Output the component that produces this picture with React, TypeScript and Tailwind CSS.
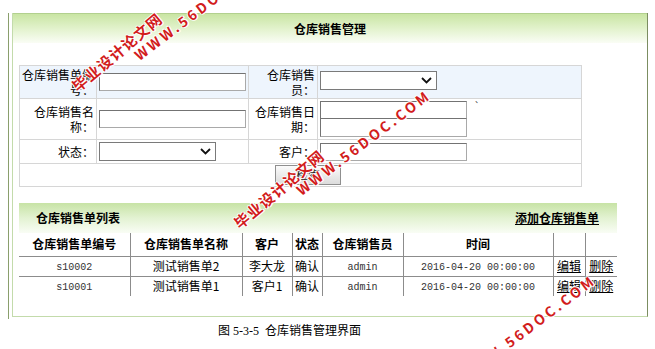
import React from "react";

const inputCls =
  "block h-[18px] w-[147px] border border-[#a9a9a9] border-t-[#737373] border-l-[#737373] bg-white";

function Select({ w }: { w: string }) {
  return (
    <div className={`relative h-[19px] ${w} border border-[#7a7a7a] bg-white`}>
      <svg
        className="absolute right-[4px] top-[5px]"
        width="11"
        height="7"
        viewBox="0 0 11 7"
      >
        <polyline points="1,1 5.5,5.5 10,1" fill="none" stroke="#111" strokeWidth="1.8" />
      </svg>
    </div>
  );
}

function Mark({ cls, text, spacing }: { cls: string; text: string; spacing: string }) {
  return (
    <div
      className={`pointer-events-none absolute whitespace-nowrap font-bold text-[#d21c1c] leading-[16px] ${spacing} [text-shadow:1px_0_#fff,-1px_0_#fff,0_1px_#fff,0_-1px_#fff,1px_1px_#fff] ${cls}`}
    >
      {text}
    </div>
  );
}

export default function App() {
  const rows = [
    { no: "s10002", name: "测试销售单", n: "2", cust: "李大龙", st: "确认", op: "admin", t: "2016-04-20 00:00:00" },
    { no: "s10001", name: "测试销售单", n: "1", cust: "客户1", st: "确认", op: "admin", t: "2016-04-20 00:00:00" },
  ];
  const mono = "[font-family:'Liberation_Mono',monospace] text-[10px] text-[#333]";
  return (
    <div className="relative h-[349px] w-[655px] overflow-hidden bg-white text-black [font-family:'Noto_Sans_CJK_SC','Liberation_Sans',sans-serif]">
      <div className="pl-[8px] pr-[7px] pt-[13px]">
        <div className="border-l border-[#8a9f6c] pb-[2px] pl-[3px]">
          <div className="flex h-[304px] flex-col border-b border-l border-r border-[#c3dbab] border-r-[#7b8d61]">
            {/* header */}
            <div className="flex h-[30px] items-center justify-center border-t border-[#b2d08e] bg-gradient-to-b from-[#c9e5a3] via-[#e2f2cc] to-[#fafdf5] text-[12px] font-bold">
              仓库销售管理
            </div>

            {/* form */}
            <div className="pl-[6px] pt-[22px]">
              <table className="w-[562px] table-fixed border-collapse text-[12px] leading-[15px]">
                <colgroup>
                  <col className="w-[77px]" />
                  <col className="w-[152px]" />
                  <col className="w-[69px]" />
                  <col className="w-[264px]" />
                </colgroup>
                <tbody>
                  <tr className="h-[33px] bg-[#eef5fd]">
                    <td className="border border-[#d6d6d6] pr-[2px] text-right align-middle">
                      仓库销售单编
                      <br />
                      号：
                    </td>
                    <td className="border border-[#d6d6d6] px-[2px]">
                      <input className={inputCls} />
                    </td>
                    <td className="border border-[#d6d6d6] pr-[2px] text-right">
                      仓库销售
                      <br />
                      员：
                    </td>
                    <td className="border border-[#d6d6d6] px-[2px] pb-[4px]">
                      <Select w="w-[117px]" />
                    </td>
                  </tr>
                  <tr className="h-[41px]">
                    <td className="border border-[#d6d6d6] pr-[2px] text-right">
                      仓库销售名
                      <br />
                      称：
                    </td>
                    <td className="border border-[#d6d6d6] px-[2px]">
                      <input className={inputCls} />
                    </td>
                    <td className="border border-[#d6d6d6] pr-[2px] text-right">
                      仓库销售日
                      <br />
                      期：
                    </td>
                    <td className="border border-[#d6d6d6] px-[2px]">
                      <div className="flex items-start">
                        <div className="flex flex-col">
                          <input className={inputCls} />
                          <input className={`${inputCls} -mt-[1px] h-[19px]`} />
                        </div>
                        <span className="ml-[7px] text-[10px] leading-[10px] text-[#444]">`</span>
                      </div>
                    </td>
                  </tr>
                  <tr className="h-[24px]">
                    <td className="border border-[#d6d6d6] pr-[2px] text-right">状态：</td>
                    <td className="border border-[#d6d6d6] px-[2px]">
                      <Select w="w-[117px]" />
                    </td>
                    <td className="border border-[#d6d6d6] pr-[2px] text-right">客户：</td>
                    <td className="border border-[#d6d6d6] px-[2px]">
                      <input className={inputCls} />
                    </td>
                  </tr>
                  <tr className="h-[23px]">
                    <td colSpan={4} className="border border-[#d6d6d6] pl-[255px]">
                      <button className="block h-[20px] w-[66px] border border-[#8f8f8f] bg-gradient-to-b from-[#fbfbfb] to-[#dcdcdc] text-[12px] leading-[18px] text-[#222]">
                        检索
                      </button>
                    </td>
                  </tr>
                </tbody>
              </table>
            </div>

            {/* list */}
            <div className="pl-[6px] pt-[16px]">
              <div className="flex h-[30px] w-[598px] items-center justify-between bg-gradient-to-b from-[#c7e3a5] via-[#e3f2d2] to-[#f9fdf5] pl-[17px] pr-[18px] text-[12px] font-bold">
                <span>仓库销售单列表</span>
                <span className="underline">添加仓库销售单</span>
              </div>
              <table className="w-[598px] table-fixed border-collapse text-[12px]">
                <colgroup>
                  <col className="w-[111px]" />
                  <col className="w-[112px]" />
                  <col className="w-[50px]" />
                  <col className="w-[30px]" />
                  <col className="w-[81px]" />
                  <col className="w-[150px]" />
                  <col className="w-[32px]" />
                  <col className="w-[32px]" />
                </colgroup>
                <thead>
                  <tr className="h-[23px] font-bold">
                    <th className="border-b border-r border-[#8c8c8c] text-center">仓库销售单编号</th>
                    <th className="border-b border-r border-[#8c8c8c] text-center">仓库销售单名称</th>
                    <th className="border-b border-r border-[#8c8c8c] text-center">客户</th>
                    <th className="border-b border-r border-[#8c8c8c] text-center">状态</th>
                    <th className="border-b border-r border-[#8c8c8c] text-center">仓库销售员</th>
                    <th className="border-b border-r border-[#8c8c8c] text-center">时间</th>
                    <th className="border-b border-r border-[#8c8c8c]"></th>
                    <th className="border-b border-[#8c8c8c]"></th>
                  </tr>
                </thead>
                <tbody>
                  {rows.map((r, i) => (
                    <tr key={r.no} className="h-[19px] leading-[16px]">
                      <td className={`border-r border-[#8c8c8c] text-center ${i === 0 ? "border-b" : ""}`}>
                        <span className={mono}>{r.no}</span>
                      </td>
                      <td className={`border-r border-[#8c8c8c] text-center ${i === 0 ? "border-b" : ""}`}>
                        {r.name}
                        {r.n}
                      </td>
                      <td className={`border-r border-[#8c8c8c] text-center ${i === 0 ? "border-b" : ""}`}>{r.cust}</td>
                      <td className={`border-r border-[#8c8c8c] text-center ${i === 0 ? "border-b" : ""}`}>{r.st}</td>
                      <td className={`border-r border-[#8c8c8c] text-center ${i === 0 ? "border-b" : ""}`}>
                        <span className={mono}>{r.op}</span>
                      </td>
                      <td className={`border-r border-[#8c8c8c] text-center ${i === 0 ? "border-b" : ""}`}>
                        <span className={mono}>{r.t}</span>
                      </td>
                      <td className={`border-r border-[#8c8c8c] text-center ${i === 0 ? "border-b" : ""}`}>
                        <span className="underline">编辑</span>
                      </td>
                      <td className={`border-[#8c8c8c] text-center ${i === 0 ? "border-b" : ""}`}>
                        <span className="underline">删除</span>
                      </td>
                    </tr>
                  ))}
                </tbody>
              </table>
            </div>
          </div>
        </div>
      </div>

      {/* caption */}
      <div className="pl-[218px] pt-[5px] text-[12px] leading-[14px] [font-family:'Liberation_Serif','Noto_Sans_CJK_SC',serif]">
        图 5-3-5&nbsp; 仓库销售管理界面
      </div>

      {/* watermarks */}
      <Mark cls="left-[69px] top-[82px] origin-top-left -rotate-[40deg] text-[15px]" spacing="tracking-[1px]" text="毕业设计论文网" />
      <Mark cls="left-[131px] top-[50px] origin-top-left -rotate-[37deg] text-[14px]" spacing="tracking-[3px]" text="WWW.56DOC.COM" />
      <Mark cls="left-[231px] top-[219px] origin-top-left -rotate-[40deg] text-[15px]" spacing="tracking-[1px]" text="毕业设计论文网" />
      <Mark cls="left-[293px] top-[185px] origin-top-left -rotate-[37deg] text-[14px]" spacing="tracking-[3px]" text="WWW.56DOC.COM" />
      <Mark cls="left-[458px] top-[370px] origin-top-left -rotate-[37deg] text-[14px]" spacing="tracking-[3px]" text="WWW.56DOC.COM" />
    </div>
  );
}
